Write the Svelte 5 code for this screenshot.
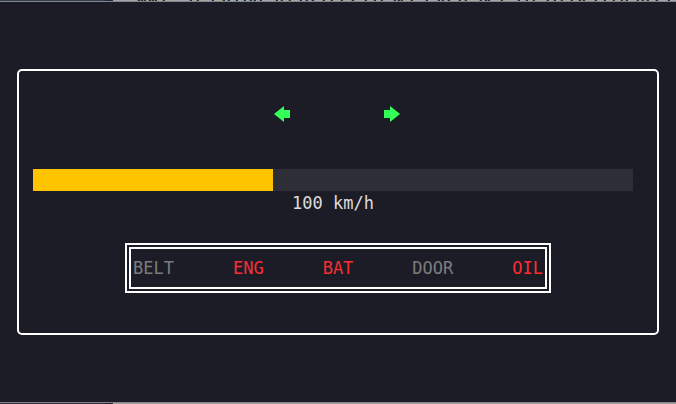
<script>
  const speed = 100;
  const maxSpeed = 250;
  const lamps = [
    { name: 'BELT', on: false },
    { name: 'ENG', on: true },
    { name: 'BAT', on: true },
    { name: 'DOOR', on: false },
    { name: 'OIL', on: true }
  ];
  // Marks on the sliver of window visible above the terminal
  const marks = [
    138, 141, 144, 149, 152, 155, 163, 190, 197, 212, 223, 228, 236, 244, 250,
    254, 260, 276, 281, 289, 300, 306, 312, 323, 331, 341, 352, 365, 374, 381,
    394, 398, 401, 411, 426, 438, 442, 448, 459, 465, 480, 485, 488, 501, 518,
    526, 533, 547, 554, 561, 571, 579, 583, 595, 604, 613, 621, 626, 637, 642,
    647, 656, 668
  ];
  const markPath = marks.map((x) => `M${x} 0h2v1h-2z`).join('');
  const fringePath = marks.map((x) => `M${x - 1} 0h1v1h-1z`).join('');
</script>

<div class="screen">
  <div class="edge top">
    <svg width="676" height="1" aria-hidden="true">
      <path d={fringePath} fill="#a07848" />
      <path d={markPath} fill="#203040" />
    </svg>
  </div>
  <main>
    <section class="panel" aria-label="Dashboard">
      <div class="signals">
        <svg width="16" height="16" viewBox="0 0 16 16" role="img" aria-label="Left indicator">
          <path d="M0 8 10 0V4H16V12H10V16Z" />
        </svg>
        <svg width="16" height="16" viewBox="0 0 16 16" role="img" aria-label="Right indicator">
          <path d="M16 8 6 0V4H0V12H6V16Z" />
        </svg>
      </div>
      <div class="speed">
        <progress id="speed" value={speed} max={maxSpeed}></progress>
        <label for="speed">{speed} km/h</label>
      </div>
      <div class="lamps">
        {#each lamps as lamp}
          <span class:on={lamp.on}>{lamp.name}</span>
        {/each}
      </div>
    </section>
  </main>
  <div class="edge bottom"></div>
</div>

<style>
  :global(body) {
    margin: 0;
    background: #1c1c27;
  }
  .screen {
    box-sizing: border-box;
    min-height: 100vh;
    display: flex;
    flex-direction: column;
    background: #1c1c27;
    color: #dcdcdc;
    font-family: "DejaVu Sans Mono", monospace;
    font-size: 17px;
    line-height: 24px;
  }
  .edge {
    box-sizing: border-box;
    height: 2px;
    overflow: hidden;
  }
  .edge svg {
    display: block;
  }
  .top {
    background: linear-gradient(90deg, #353c4c 105px, #22263a 105px 113px, #a2a4a6 113px);
    border-bottom: 1px solid #80848c;
  }
  .bottom {
    background: linear-gradient(90deg, #34303a 105px, #221f28 105px 113px, #a2a2a2 113px);
    border-top: 1px solid #858585;
  }
  main {
    flex: 1;
    display: flex;
    flex-direction: column;
    justify-content: center;
    padding: 0 17px;
  }
  .panel {
    display: flex;
    flex-direction: column;
    padding: 32px 24px 40px 14px;
    border: 2px solid #fff;
    border-radius: 5px;
  }
  .signals {
    display: flex;
    justify-content: center;
    align-items: center;
    gap: 94px;
    height: 22px;
    margin: 0 0 44px 8px;
    fill: #33ff57;
  }
  .speed {
    display: flex;
    flex-direction: column;
    text-align: center;
  }
  progress {
    appearance: none;
    display: block;
    width: 100%;
    height: 22px;
    border: 0;
    background: #2e2e36;
  }
  progress::-webkit-progress-bar {
    background: #2e2e36;
  }
  progress::-webkit-progress-value {
    background: #ffc400;
  }
  progress::-moz-progress-bar {
    background: #ffc400;
  }
  .lamps {
    box-sizing: border-box;
    display: flex;
    justify-content: space-between;
    align-self: center;
    width: 426px;
    max-width: 100%;
    margin: 28px 0 0 10px;
    padding: 7px 2px;
    border: 6px double #fff;
    color: #7c7c7c;
  }
  .on {
    color: #fb2d32;
  }
</style>
